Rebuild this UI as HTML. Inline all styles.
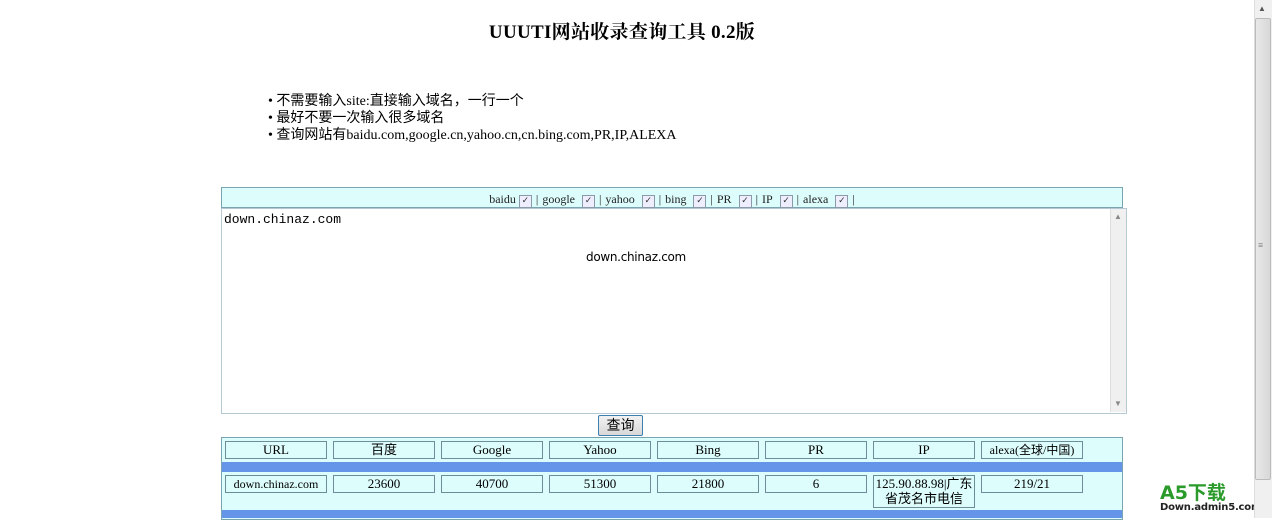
<!DOCTYPE html>
<html><head><meta charset="utf-8"><style>
body{margin:0;width:1272px;height:518px;overflow:hidden;background:#fff;font-family:"Liberation Serif","Noto Serif CJK SC",serif;position:relative}
.a{position:absolute}
h1{position:absolute;left:0;width:1244px;top:17px;margin:0;text-align:center;font-size:19px;font-weight:bold;letter-spacing:0.3px}
.li{position:absolute;left:268px;font-size:14px;line-height:17px;font-family:"Liberation Serif","Noto Sans CJK SC",serif}
.cell{position:absolute;width:100px;height:16px;border:1px solid #6a8f9a;background:#ddfcfc;text-align:center;font-size:13px;line-height:16px;font-family:"Liberation Serif","Noto Sans CJK SC",serif}
.cb{display:inline-block;width:11px;height:11px;border:1px solid #8a9aa8;background:#eef;font-size:9px;line-height:11px;vertical-align:0px;color:#333;font-family:"DejaVu Sans";text-align:center;margin:0 4px 0 3px}
.s{margin:0 4px}
</style></head><body>
<h1>UUUTI网站收录查询工具 0.2版</h1>
<div class="li" style="top:93px">• 不需要输入site:直接输入域名，一行一个</div>
<div class="li" style="top:110px">• 最好不要一次输入很多域名</div>
<div class="li" style="top:127px">• 查询网站有baidu.com,google.cn,yahoo.cn,cn.bing.com,PR,IP,ALEXA</div>
<div class="a" style="left:221px;top:187px;width:900px;height:19px;border:1px solid #7aa4b0;background:#ddfdfd;text-align:center;font-size:12px;line-height:22px;color:#222">baidu<span class="cb">✓</span>|<span class="s">google</span><span class="cb">✓</span>|<span class="s">yahoo</span><span class="cb">✓</span>|<span class="s">bing</span><span class="cb">✓</span>|<span class="s">PR</span><span class="cb">✓</span>|<span class="s">IP</span><span class="cb">✓</span>|<span class="s">alexa</span><span class="cb">✓</span>|</div>
<div class="a" style="left:221px;top:208px;width:904px;height:204px;border:1px solid #b6c8d4;background:#fff"></div>
<div class="a" style="left:1110px;top:209px;width:15px;height:203px;background:#f0f0f0;border-left:1px solid #ddd"></div>
<div class="a" style="left:1114px;top:212px;font-size:8px;color:#888">▲</div>
<div class="a" style="left:1114px;top:399px;font-size:8px;color:#888">▼</div>
<div class="a" style="left:224px;top:212px;font-family:'Liberation Mono',monospace;font-size:13px">down.chinaz.com</div>
<div class="a" style="left:586px;top:250px;font-family:'DejaVu Sans',sans-serif;font-size:12px;letter-spacing:-0.3px">down.chinaz.com</div>
<div class="a" style="left:598px;top:415px;width:43px;height:19px;border:1px solid #3c7fb1;border-radius:2px;background:linear-gradient(#f2f2f2,#d8d8d8);text-align:center;font-size:14px;line-height:19px;font-family:'Noto Sans CJK SC',sans-serif">查询</div>
<div class="a" style="left:221px;top:437px;width:900px;height:81px;border:1px solid #7aa4b0;background:#ddfdfd"></div>
<div class="a" style="left:222px;top:462px;width:900px;height:10px;background:#6495e8"></div>
<div class="a" style="left:222px;top:510px;width:900px;height:8px;background:#6495e8"></div>
<div class="cell" style="left:225px;top:441px">URL</div>
<div class="cell" style="left:333px;top:441px">百度</div>
<div class="cell" style="left:441px;top:441px">Google</div>
<div class="cell" style="left:549px;top:441px">Yahoo</div>
<div class="cell" style="left:657px;top:441px">Bing</div>
<div class="cell" style="left:765px;top:441px">PR</div>
<div class="cell" style="left:873px;top:441px">IP</div>
<div class="cell" style="left:981px;top:441px;font-size:12px">alexa(全球/中国)</div>
<div class="cell" style="left:225px;top:475px;font-size:12px">down.chinaz.com</div>
<div class="cell" style="left:333px;top:475px">23600</div>
<div class="cell" style="left:441px;top:475px">40700</div>
<div class="cell" style="left:549px;top:475px">51300</div>
<div class="cell" style="left:657px;top:475px">21800</div>
<div class="cell" style="left:765px;top:475px">6</div>
<div class="cell" style="left:873px;top:475px;height:31px;line-height:15px">125.90.88.98|广东省茂名市电信</div>
<div class="cell" style="left:981px;top:475px">219/21</div>
<div class="a" style="left:1160px;top:483px;font-family:'DejaVu Sans','Noto Sans CJK SC',sans-serif;font-weight:bold;font-size:19px;color:#2a9a2a;line-height:20px">A5下载</div>
<div class="a" style="left:1160px;top:502px;font-family:'DejaVu Sans',sans-serif;font-weight:bold;font-size:10px;color:#222;letter-spacing:-0.2px">Down.admin5.com</div>
<div class="a" style="left:1254px;top:0;width:17px;height:518px;background:#f0f0f0;border-left:1px solid #ddd"></div>
<div class="a" style="left:1255px;top:18px;width:14px;height:460px;background:linear-gradient(90deg,#e8e8e8,#d8d8d8);border:1px solid #bbb;border-radius:2px"></div>
<div class="a" style="left:1258px;top:4px;font-size:8px;color:#555">▲</div>
<div class="a" style="left:1258px;top:240px;font-size:9px;color:#666">≡</div>
</body></html>
